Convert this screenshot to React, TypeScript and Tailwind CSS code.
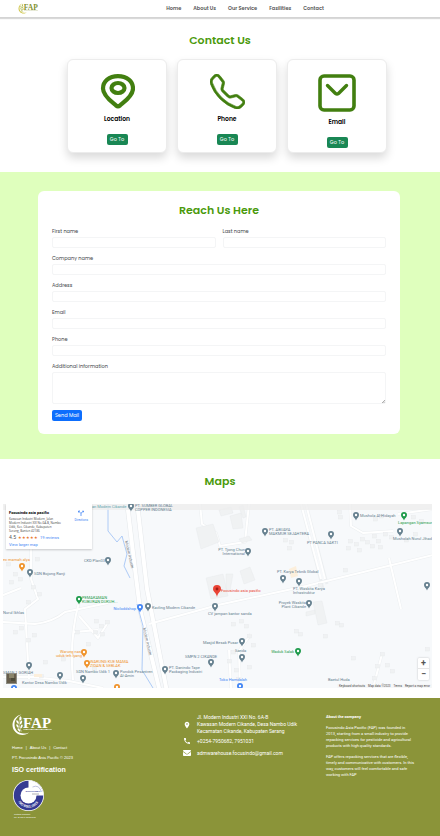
import React from "react";
import { BsTelephone } from "react-icons/bs";
import { FaEnvelope } from "react-icons/fa";
import { MdCall, MdLocationOn } from "react-icons/md";

const poppins = "font-[Poppins,Inter,sans-serif]";

function Logo({ className, main, accent, leaf }: { className: string; main: string; accent: string; leaf: string }) {
  return (
    <svg className={className} viewBox="0 0 82 44" role="img" aria-label="FAP">
      <path d="M19 1C8 3 1 12 1 22c0 11 9 20 20 20 5 0 10-2 13-5-4 2-7 2-10 2C12 39 5 31 5 21 5 12 11 4 19 1z" fill={accent} />
      <path d="M17 5c-4 9-4 20 2 30" stroke={leaf} strokeWidth="1" fill="none" />
      <g fill={leaf}>
        <ellipse cx="17" cy="9" rx="2" ry="4" />
        <ellipse cx="11" cy="16" rx="1.8" ry="4" transform="rotate(-30 11 16)" />
        <ellipse cx="18" cy="17" rx="1.8" ry="4" transform="rotate(25 18 17)" />
        <ellipse cx="11" cy="24" rx="1.8" ry="4" transform="rotate(-30 11 24)" />
        <ellipse cx="19" cy="25" rx="1.8" ry="4" transform="rotate(25 19 25)" />
        <ellipse cx="14" cy="32" rx="1.8" ry="4" transform="rotate(-40 14 32)" />
      </g>
      <text x="22" y="27" fontFamily="Liberation Serif, serif" fontWeight="bold" fontSize="30" fill={main}>FAP</text>
      <path d="M23 31h56" stroke={main} strokeWidth="2" strokeDasharray="2 .5" opacity=".7" />
    </svg>
  );
}

function LocationIcon() {
  return (
    <svg className="h-[35px] w-[35px]" viewBox="0 0 35 35" fill="none" stroke="#427f10" aria-hidden="true">
      <path d="M18 2.200C9 2.200 3 7.500 3 14.500c0 7.500 9 13.500 13 17q2 1.500 4 0C24 28 33 22 33 14.500 33 7.500 27 2.200 18 2.200z" strokeWidth="4.200" />
      <ellipse cx="18" cy="14" rx="6.500" ry="5" strokeWidth="4.200" />
    </svg>
  );
}

function MailIcon() {
  return (
    <svg className="h-[38px] w-[38px]" viewBox="0 0 38 38" fill="none" stroke="#427f10" strokeLinecap="round" strokeLinejoin="round" aria-hidden="true">
      <rect x="2" y="2" width="34" height="34" rx="4" strokeWidth="3.600" />
      <path d="M9.500 11.500l8 8q1.500 1.200 3 0l8-8" strokeWidth="3.400" />
    </svg>
  );
}

const channels = [
  { name: "Location", icon: <LocationIcon /> },
  { name: "Phone", icon: <BsTelephone className="h-[35px] w-[35px] text-[#427f10]" strokeWidth=".3" aria-hidden="true" /> },
  { name: "Email", icon: <MailIcon /> },
];

function Title({ children }: { children: React.ReactNode }) {
  return <h2 className="text-center text-[11px] leading-4 font-semibold text-[#4b9a0c]">{children}</h2>;
}

function Field({ id, label, wide }: { id: string; label: string; wide?: boolean }) {
  return (
    <div className={wide ? "col-span-2" : ""}>
      <label htmlFor={id} className="block text-[5px] leading-[8px] text-[#43474b]">{label}</label>
      <input id={id} className="mt-px block h-[11px] w-full rounded-[2px] border border-[#f4f5f6] bg-white px-1 text-[5px] outline-none" />
    </div>
  );
}

const slate = "#66808f";
const green = "#1d9a4a";
const orange = "#f0932b";
const blue = "#4285f4";
const teal = "#5fa5ae";
const red = "#ea4335";

type Place = { x: number; y: number; text: string; color?: string; right?: boolean };

const labels: Place[] = [
  { x: 10, y: 2, text: "Agar Cikande", color: teal },
  { x: 77, y: 3, text: "Kawasan Modern Cikande", color: teal },
  { x: 132, y: 4, text: "PT. SUMBER GLOBAL\nCOPPER INDONESIA" },
  { x: 102, y: 57, text: "CKD Plan03", right: true },
  { x: 0, y: 56, text: "ex mamah alya", color: orange },
  { x: 31, y: 70, text: "SDN Bojong Ranji" },
  { x: 79, y: 96, text: "PEMAKAMAN\nKUBURAN DUKUH...", color: green },
  { x: 0, y: 109, text: "Nurul Ikhlas" },
  { x: 133, y: 105, text: "Nicloddshop", color: blue, right: true },
  { x: 149, y: 104, text: "Kavling Modern Cikande" },
  { x: 79, y: 150, text: "Warung nasi\nuduk teh Iyang", color: orange, right: true },
  { x: 87, y: 160, text: "WARUNG KUE MAMA\nZIDAN & SEBLAK", color: orange },
  { x: 0, y: 169, text: "SMAN 1 GORIAH" },
  { x: 19, y: 179, text: "Kantor Desa Nambo Udik" },
  { x: 73, y: 168, text: "SDN Nambo Udik 1" },
  { x: 117, y: 170, text: "Pondok Pesantren\nAl-Amin" },
  { x: 182, y: 153, text: "SMPN 2 CIKANDE" },
  { x: 166, y: 166, text: "PT. Danindo Tape\nPackaging Industri" },
  { x: 235, y: 139, text: "Masjid Besak Pusar", right: true },
  { x: 232, y: 147, text: "Sanda" },
  { x: 244, y: 176, text: "Toko Hamdalah", color: blue, right: true },
  { x: 218, y: 87, text: "Focusindo asia pasific", color: red },
  { x: 205, y: 110, text: "CV jampan kantor sanda" },
  { x: 242, y: 48, text: "PT. Tjong Chun\nInternational", right: true },
  { x: 266, y: 28, text: "PT. ABUAYA\nMAKMUR SEJAHTERA" },
  { x: 274, y: 68, text: "PT. Karya Teknik Global" },
  { x: 290, y: 87, text: "PT. Waskita Karya\nInfrastruktur" },
  { x: 303, y: 101, text: "Proyek Waskita\nPlant Cikande", right: true },
  { x: 304, y: 39, text: "PT PANCA SAKTI" },
  { x: 357, y: 12, text: "Mushola Al-Hidayah" },
  { x: 395, y: 19, text: "Lapangan Syamsuri", color: green },
  { x: 390, y: 35, text: "Musholah Nurul Jihad" },
  { x: 291, y: 148, text: "Waduk Salak", color: green, right: true },
  { x: 325, y: 176, text: "Baetul Huda" },
];

const pins: { x: number; y: number; color?: string }[] = [
  { x: 128, y: 3 }, { x: 105, y: 57 }, { x: 19, y: 63, color: orange }, { x: 27, y: 69 },
  { x: 76, y: 96, color: green }, { x: 137, y: 104, color: blue }, { x: 145, y: 103 },
  { x: 81, y: 149, color: orange }, { x: 84, y: 160, color: orange }, { x: 26, y: 162 },
  { x: 57, y: 172 }, { x: 80, y: 175 }, { x: 113, y: 170 }, { x: 114, y: 184, color: orange },
  { x: 11, y: 185, color: blue }, { x: 208, y: 159 }, { x: 162, y: 166 }, { x: 239, y: 138 },
  { x: 239, y: 154 }, { x: 237, y: 183, color: blue }, { x: 212, y: 103 }, { x: 245, y: 48 },
  { x: 262, y: 28 }, { x: 280, y: 75 }, { x: 296, y: 78 }, { x: 306, y: 100 }, { x: 328, y: 31 },
  { x: 353, y: 12 }, { x: 401, y: 12, color: green }, { x: 397, y: 28 }, { x: 424, y: 82 },
  { x: 295, y: 148, color: green },
];

const houses = [
  [30, 83], [36, 90], [12, 70], [8, 78], [17, 75], [5, 60], [34, 55], [25, 98], [18, 124], [12, 128], [25, 136], [31, 131],
  [93, 117], [98, 122], [104, 118], [92, 128], [99, 130], [74, 128], [85, 140], [60, 155], [42, 158], [38, 172], [91, 165],
  [347, 37], [353, 40], [359, 35], [364, 38], [371, 32], [375, 37], [382, 30], [388, 33], [345, 44], [356, 46], [369, 42], [377, 43],
  [336, 8], [337, 13], [372, 15], [378, 12], [410, 13], [418, 17], [403, 36], [412, 30],
  [238, 117], [243, 122], [246, 132], [250, 141], [230, 148], [226, 157], [233, 166], [246, 163], [235, 175], [230, 120],
  [293, 127], [334, 119], [338, 121], [322, 132], [297, 130], [350, 154], [379, 150], [374, 162], [384, 161], [389, 167], [371, 174], [424, 145],
  [282, 36], [288, 38], [286, 44], [317, 81], [342, 66],
];

function MapPin({ x, y, color }: { x: number; y: number; color?: string }) {
  const c = color ?? slate;
  return (
    <g transform={`translate(${x} ${y})`}>
      <path d="M0 4.500C-.8 1.800-3 1.500-3-1A3 3 0 0 1 3-1C3 1.500.8 1.800 0 4.500z" fill={c} />
      <circle cy="-1" r="1.200" fill="#fff" />
    </g>
  );
}

function MapDrawing() {
  const minor =
    "M-2 118L32 120Q50 118 62 108L105 99M28 0L28 75 35 95 22 105 26 175M76 98Q66 135 70 176M76 112L95 134 104 120M-2 92L18 84M0 173L30 173 66 177 100 184M197 0L199 20 213 29 217 42 242 38 246 0M146 120L215 101 303 82 430 51M347 0L348 22 360 29 390 27M386 54L398 105M248 130L236 147 237 184M226 146L228 184M379 150L370 184M71 128L95 126M395 10L430 5";
  return (
    <svg className="absolute inset-0 h-full w-full" viewBox="0 0 429 184" preserveAspectRatio="xMinYMin slice" aria-hidden="true">
      <rect width="429" height="184" fill="#f7f9fb" />
      <g fill="none" strokeLinejoin="round">
        <path d={minor} stroke="#eceff1" strokeWidth="3" />
        <path d="M298 0L320 85M303 0L324 80" stroke="#eceff1" strokeWidth="3" />
        <path d="M124-2L132 65 137 105 157 188M134-2L144 85 164 188" stroke="#e4e7ea" strokeWidth="5" />
        <path d={minor} stroke="#fff" strokeWidth="2" />
        <path d="M298 0L318 75M303 0L322 75" stroke="#fff" strokeWidth="2" />
        <path d="M124-2L132 65 137 105 157 188M134-2L144 85 164 188" stroke="#fff" strokeWidth="4" />
        <path d="M105 0V27L114 38 119 32 124 50 121 62 127 74M134 100L140 122 139 166 150 184" stroke="#a5c5f5" strokeWidth=".9" />
      </g>
      <g fill="#f0f2f3" stroke="#e6e8ea" strokeWidth=".4">
        {houses.map(([x, y]) => (
          <rect key={`${x}-${y}`} x={x - 1.5} y={y - 1.5} width="4" height="3.500" />
        ))}
        <path d="M193 24l17-4 6 18-18 7zM216 6l12-3 2 6-12 3zM227 12l11-3 2 15-10 1zM236 35l10-3 3 4-10 3zM203 74l17-4 5 22-17 3zM223 70l7 0-3 17-4-2zM237 67l10-4 5 13-11 4zM236 3l4-2 3 12-3 1z" />
        <path d="M310 98l9-1 5 22-9 2zM303 108l9-2 0 4-9 2z" />
      </g>
      <path d="M286 65l7-3 2 10-7 2zM31 170h8v3h-8z" fill="#fcefdc" />
      <rect width="429" height="6" fill="#eeeeee" opacity=".8" />
      {pins.map((p) => (
        <MapPin key={`${p.x}-${p.y}`} {...p} />
      ))}
      <path d="M214 93C213 88 210 88 210 85A4 4 0 0 1 218 85C218 88 215 88 214 93z" fill={red} />
      <circle cx="214" cy="85" r="1.400" fill="#a11d16" />
      <text transform="translate(122 37) rotate(77)" fontSize="4" fontFamily="Roboto, sans-serif" fill="#7b8288">Modern Industri</text>
      <text transform="translate(140 124) rotate(77)" fontSize="4" fontFamily="Roboto, sans-serif" fill="#7b8288">Modern Industri</text>
    </svg>
  );
}

function MapView() {
  return (
    <div className="relative mt-[15px] mr-2 ml-[3px] h-[184px] overflow-hidden font-[Roboto,sans-serif] text-[4px] leading-[4px]">
      <MapDrawing />
      {labels.map((l) => (
        <span
          key={l.text + l.y}
          className={`absolute -translate-y-1/2 whitespace-pre ${l.right ? "-translate-x-full text-right" : ""}`}
          style={{ left: l.x, top: l.y, color: l.color ?? slate }}
        >
          {l.text}
        </span>
      ))}
      <div className="absolute top-0 left-[3px] flex h-[45px] w-[86px] justify-between bg-white pt-[6px] pr-[4px] pl-[3px] shadow-[0_1px_2px_rgba(0,0,0,0.2)]">
        <div>
          <h3 className="text-[4px] leading-[5px] font-bold text-black">Focusindo asia pasific</h3>
          <p className="mt-[2px] whitespace-pre font-[Open_Sans,sans-serif] text-[3px] text-[#444]">{"Kawasan Industri Modern, Jalan\nModern Industri XXI No.6A-B, Nambo\nUdik, Kec. Cikande, Kabupaten\nSerang, Banten 42186"}</p>
          <p className="mt-[2px] flex items-center gap-[2px] leading-[5px] text-[#555]">
            <span className="text-[5px]">4.5</span>
            <span className="text-[#e7711b]">★★★★★</span>
            <a href="#reviews" className="text-[#4285f4]">19 reviews</a>
          </p>
          <a href="#larger-map" className="mt-[2px] block leading-[5px] text-[#4285f4]">View larger map</a>
        </div>
        <a href="#directions" className="flex flex-col items-center gap-[2px] text-[3px] text-[#4285f4]">
          <svg className="h-[6px] w-[6px]" viewBox="0 0 12 12" fill="none" stroke="#4285f4" strokeWidth="1.600" aria-hidden="true">
            <path d="M6 12V7L1 2M1 5V2h3M6 7l3-4h3M10 1l2 2-2 2" />
          </svg>
          Directions
        </a>
      </div>
      <div className="absolute bottom-[4px] left-[3px] h-[11px] w-[11px] border border-[#8e8e85] bg-[#665d4c]">
        <div className="ml-[2px] h-[4px] w-[5px] bg-[#89846a]" />
        <div className="ml-[4px] h-[3px] w-[4px] bg-[#4b4a38]" />
      </div>
      <div className="absolute right-[3px] bottom-[8px] flex w-[11px] flex-col divide-y divide-[#e6e6e6] rounded-[1px] bg-white text-[#555] shadow-[0_0_2px_rgba(0,0,0,0.25)]">
        <button type="button" aria-label="Zoom in" className="flex h-[11px] items-center justify-center text-[9px] leading-[9px] font-bold">+</button>
        <button type="button" aria-label="Zoom out" className="flex h-[11px] items-center justify-center text-[9px] leading-[9px] font-bold">−</button>
      </div>
      <div className="absolute right-0 bottom-0 flex gap-[3px] bg-[#f5f6f7] px-[2px] text-[3px] text-[#444]">
        <span>Keyboard shortcuts</span>
        <span>Map data ©2023</span>
        <a href="#terms">Terms</a>
        <a href="#report">Report a map error</a>
      </div>
    </div>
  );
}

function IsoBadge() {
  return (
    <svg className="h-[31px] w-[31px]" viewBox="0 0 62 62" role="img" aria-label="ISO 9001:2015">
      <circle cx="31" cy="31" r="31" fill="#fff" />
      <circle cx="31" cy="31" r="29.500" fill="#343a92" />
      <circle cx="31" cy="31" r="16" fill="#fff" />
      <path d="M31 1A30 30 0 0 1 61 31H31z" fill="#fff" />
      <path d="M39 14Q52 8 57 24" stroke="#8289c0" strokeWidth="1" fill="none" />
      <text x="25" y="24" fontFamily="Liberation Sans, sans-serif" fontWeight="bold" fontSize="5" fill="#343a92">SUCOFINDO</text>
      <path d="M38 28h14" stroke="#9a9a9a" strokeWidth="1.500" />
      <path id="isoArc" d="M9 41A24 24 0 0 0 53 41" fill="none" />
      <text fontFamily="Liberation Sans, sans-serif" fontWeight="bold" fontSize="7" fill="#fff">
        <textPath href="#isoArc" startOffset="3">ISO 9001:2015</textPath>
      </text>
    </svg>
  );
}

export default function App() {
  return (
    <div className={`bg-white ${poppins}`}>
      <header className="relative flex h-[18px] items-center justify-center border-b border-[#d4d4d4] bg-white shadow-[0_1px_1px_rgba(0,0,0,0.15)]">
        <a href="#home" className="absolute left-[18px]"><Logo className="h-[11px] w-[21px]" main="#81922f" accent="#d0c64b" leaf="#a9b548" /></a>
        <nav className="ml-[50px] flex gap-[12px] text-[5px] leading-[8px] font-semibold text-[#555]">
          <a href="#home">Home</a>
          <a href="#about">About Us</a>
          <a href="#service">Our Service</a>
          <a href="#fasilities">Fasilities</a>
          <a href="#contact">Contact</a>
        </nav>
      </header>

      <main>
        <section className="pt-[14px] pb-[19px]">
          <Title>Contact Us</Title>
          <div className="mt-[11px] flex justify-center gap-[10px] pl-[14px]">
            {channels.map((c) => (
              <article key={c.name} className="flex w-[100px] flex-col items-center rounded-[6px] border border-[#ececec] bg-white pt-[14px] pb-1 shadow-[0_5px_10px_rgba(0,0,0,0.15)]">
                {c.icon}
                <h3 className="mt-[6px] text-[6px] leading-[8px] font-semibold text-black">{c.name}</h3>
                <button type="button" className="mt-[11px] h-[11px] w-[21px] rounded-[2px] bg-[#198754] text-[5px] leading-[11px] text-white">Go To</button>
              </article>
            ))}
          </div>
        </section>

        <section className="bg-[#dfffbd] pt-[19px] pr-10 pb-[25px] pl-[38px]">
          <form className="rounded-[6px] bg-white px-[14px] pt-[11px] pb-[13px]">
            <Title>Reach Us Here</Title>
            <div className="mt-[10px] grid grid-cols-2 gap-[7px]">
              <Field id="first" label="First name" />
              <Field id="last" label="Last name" />
              <Field id="company" label="Company name" wide />
              <Field id="address" label="Address" wide />
              <Field id="email" label="Email" wide />
              <Field id="phone" label="Phone" wide />
              <div className="col-span-2">
                <label htmlFor="info" className="block text-[5px] leading-[8px] text-[#43474b]">Additional information</label>
                <div className="relative mt-px">
                  <textarea id="info" className="block h-8 w-full resize-none rounded-[2px] border border-[#f4f5f6] p-1 text-[5px] outline-none" />
                  <svg className="absolute right-px bottom-px h-[3px] w-[3px]" viewBox="0 0 3 3" stroke="#777" strokeWidth=".6" aria-hidden="true"><path d="M0 3L3 0M1.500 3L3 1.500" /></svg>
                </div>
              </div>
            </div>
            <button type="submit" className="mt-[6px] block h-[11px] w-[30px] rounded-[2px] bg-[#0d6efd] text-[5px] leading-[11px] text-white">Send Mail</button>
          </form>
        </section>

        <section className="pt-[14px] pb-[10px]">
          <Title>Maps</Title>
          <MapView />
        </section>
      </main>

      <footer className="grid grid-cols-[171fr_143fr_102fr] bg-[#8b9439] px-3 pt-4 pb-[18px] font-[Roboto,sans-serif] text-[5px] text-white">
        <div className="font-[Liberation_Sans,sans-serif] text-[4px]">
          <Logo className="h-[22px] w-[41px]" main="#fff" accent="#fff" leaf="#fff" />
          <nav className="mt-[8px] flex gap-[3px] leading-[8px]">
            <a href="#home">Home</a><span>|</span><a href="#about">About Us</a><span>|</span><a href="#contact">Contact</a>
          </nav>
          <p className="mt-[2px] leading-[8px]">PT. Focusindo Asia Pacific © 2023</p>
          <h3 className="mt-[3px] text-[7px] leading-[10px] font-bold">ISO certification</h3>
          <div className="mt-[5px] ml-px"><IsoBadge /></div>
          <p className="mt-[2px] ml-[2px] text-[2px] leading-[3px]">Certified Company<br />No. ID SIS-1 QSC00008</p>
        </div>
        <address className="not-italic">
          <div className="flex items-center gap-[6px]">
            <MdLocationOn className="h-[8px] w-[8px]" aria-hidden="true" />
            <p className="leading-[7px]">Jl. Modern Industri XXI No. 6A-B<br />Kawasan Modern Cikande, Desa Nambo Udik<br />Kecamatan Cikande, Kabupaten Serang</p>
          </div>
          <p className="mt-[2px] flex items-center gap-[6px] leading-[8px]"><MdCall className="h-[8px] w-[8px]" aria-hidden="true" />+0254-7950682, 7951031</p>
          <p className="mt-[4px] flex items-center gap-[6px] leading-[8px]"><FaEnvelope className="h-[8px] w-[8px]" aria-hidden="true" /><a href="mailto:admwarehouse.focusindo@gmail.com">admwarehouse.focusindo@gmail.com</a></p>
        </address>
        <div className="text-[4px] leading-[6px]">
          <h3 className="font-bold">About the company</h3>
          <p className="mt-[5px] whitespace-pre">{"Focusindo Asia Pacific (FAP) was founded in\n2013, starting from a small industry to provide\nrepacking services for pesticide and agricultural\nproducts with high quality standards."}</p>
          <p className="mt-[5px] whitespace-pre">{"FAP offers repacking services that are flexible,\ntimely and communicative with customers. In this\nway, customers will feel comfortable and safe\nworking with FAP"}</p>
        </div>
      </footer>
    </div>
  );
}
